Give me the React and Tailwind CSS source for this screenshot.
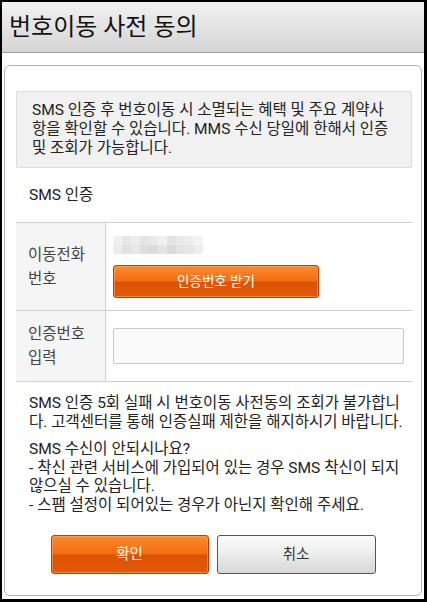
import React from 'react';

const infoLines = [
  'SMS 인증 후 번호이동 시 소멸되는 혜택 및 주요 계약사',
  '항을 확인할 수 있습니다. MMS 수신 당일에 한해서 인증',
  '및 조회가 가능합니다.',
];

// pixelated (masked) phone number
const blurTop = ['bg-[#f0f0f0]', 'bg-[#e6e6e6]', 'bg-[#ececec]', 'bg-[#e4e4e4]', 'bg-[#e9e9e9]', 'bg-[#f1f1f1]', 'bg-[#e3e3e3]', 'bg-[#e8e8e8]', 'bg-[#eeeeee]', 'bg-[#f3f3f3]'];
const blurBottom = ['bg-[#ebebeb]', 'bg-[#e1e1e1]', 'bg-[#e7e7e7]', 'bg-[#dedede]', 'bg-[#dbdbdb]', 'bg-[#e4e4e4]', 'bg-[#dadada]', 'bg-[#e2e2e2]', 'bg-[#e6e6e6]', 'bg-[#eeeeee]'];

const orangeBtn =
  'rounded-[3px] border border-[#c4380a] bg-[linear-gradient(to_bottom,#fb8a2c_0%,#f36d12_48%,#dc5204_52%,#e05a08_100%)] shadow-[inset_0_0_0_1px_rgba(255,175,110,0.55)] text-white';

const App = () => {
  return (
    <div className="w-[427px] h-[602px] bg-black pt-[2px] pl-[2px] pr-[3px] pb-[3px] font-[Roboto,'Noto_Sans_CJK_KR',sans-serif]">
      <div className="h-full bg-white flex flex-col">
        {/* Header */}
        <div className="h-[51px] border-b border-[#9c9c9c] bg-[linear-gradient(to_bottom,#f1f1f1,#d5d5d5)] flex items-center pl-[7px]">
          <h1 className="text-[24px] text-[#111] leading-none">번호이동 사전 동의</h1>
        </div>

        {/* Card */}
        <div className="mt-[12px] mx-[2px] flex-1 mb-[3px] rounded-[6px] border border-[#b3b3b3] pt-[25px] pl-[11px] pr-[9px] text-[15.5px] text-[#222]">
          <div className="rounded-[2px] border border-[#dcdcdc] bg-[#f1f1f1] pl-[15px] py-[9px] leading-[19px]">
            {infoLines.map((line) => (
              <div key={line} className="whitespace-nowrap">{line}</div>
            ))}
          </div>

          <div className="mt-[18px] pl-[13px] leading-[19px]">SMS 인증</div>

          {/* Table */}
          <div className="mt-[17px] border-t border-b border-[#cfcfcf]">
            <div className="flex h-[88px] border-b border-[#cfcfcf]">
              <div className="w-[90px] shrink-0 bg-[#f5f5f5] border-r border-[#cfcfcf] pl-[12px] flex flex-col justify-center leading-[24px] text-[#444]">
                <span>이동전화</span>
                <span>번호</span>
              </div>
              <div className="flex-1 pl-[7px] pt-[13px]">
                <div className="flex flex-col w-[90px] h-[18px] rounded-[3px] overflow-hidden">
                  <div className="flex h-[9px]">
                    {blurTop.map((c, i) => (
                      <div key={i} className={`flex-1 ${c}`} />
                    ))}
                  </div>
                  <div className="flex h-[9px]">
                    {blurBottom.map((c, i) => (
                      <div key={i} className={`flex-1 ${c}`} />
                    ))}
                  </div>
                </div>
                <button className={`mt-[11px] w-[206px] h-[33px] text-[13.5px] ${orangeBtn}`}>
                  인증번호 받기
                </button>
              </div>
            </div>
            <div className="flex h-[70px]">
              <div className="w-[90px] shrink-0 bg-[#f5f5f5] border-r border-[#cfcfcf] pl-[12px] flex flex-col justify-center leading-[24px] text-[#444]">
                <span>인증번호</span>
                <span>입력</span>
              </div>
              <div className="flex-1 pl-[7px] pr-[8px] flex items-center">
                <input
                  type="text"
                  className="w-full h-[36px] rounded-[2px] border border-[#c9c9c9] bg-[#fafafa] outline-none"
                />
              </div>
            </div>
          </div>

          {/* Notice */}
          <div className="mt-[12px] pl-[13px] leading-[18.5px]">
            <div className="whitespace-nowrap">SMS 인증 5회 실패 시 번호이동 사전동의 조회가 불가합니</div>
            <div className="whitespace-nowrap">다. 고객센터를 통해 인증실패 제한을 해지하시기 바랍니다.</div>
            <div className="mt-[9px] whitespace-nowrap">SMS 수신이 안되시나요?</div>
            <div className="whitespace-nowrap">- 착신 관련 서비스에 가입되어 있는 경우 SMS 착신이 되지</div>
            <div className="whitespace-nowrap">않으실 수 있습니다.</div>
            <div className="whitespace-nowrap">- 스팸 설정이 되어있는 경우가 아닌지 확인해 주세요.</div>
          </div>

          {/* Buttons */}
          <div className="mt-[21px] flex justify-center gap-[8px] pr-[2px]">
            <button className={`w-[158px] h-[39px] text-[14.5px] ${orangeBtn}`}>확인</button>
            <button className="w-[159px] h-[39px] rounded-[3px] border border-[#555] bg-[linear-gradient(to_bottom,#fdfdfd,#ececec_50%,#d6d6d6)] text-[14.5px] text-[#333]">
              취소
            </button>
          </div>
        </div>
      </div>
    </div>
  );
};

export default App;
